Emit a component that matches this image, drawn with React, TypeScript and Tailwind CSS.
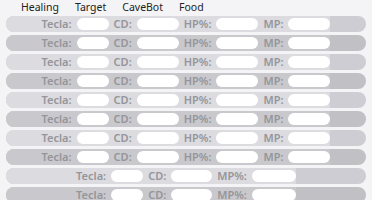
import React from "react"

const tabs = ["Healing", "Target", "CaveBot", "Food"]

type Field = { label: string; w: string }

const fullRow: Field[] = [
	{ label: "Tecla:", w: "w-[32px]" },
	{ label: "CD:", w: "w-[42px]" },
	{ label: "HP%:", w: "w-[42px]" },
	{ label: "MP:", w: "w-[42px]" },
]

const manaRow: Field[] = [
	{ label: "Tecla:", w: "w-[32px]" },
	{ label: "CD:", w: "w-[41px]" },
	{ label: "MP%:", w: "w-[44px]" },
]

const Row: React.FC<{ fields: Field[]; dark: boolean }> = ({ fields, dark }) => {
	return (
		<div
			className={`flex h-4 shrink-0 overflow-hidden rounded-full ${
				dark ? "bg-[#c0c0c5]" : "bg-[#cdcdd3]"
			}`}
		>
			<div className={`flex-1 ${dark ? "bg-[#c9c9cd]" : "bg-[#dbdbe0]"}`} />
			<div
				className={`flex items-center gap-[5px] ${dark ? "bg-[#c9c9cd]" : "bg-[#dbdbe0]"}`}
			>
				{fields.map((f) => (
					<React.Fragment key={f.label}>
						<span className="text-[11px] font-semibold leading-none text-[#95959a]">
							{f.label}
						</span>
						<div className={`h-3 rounded-full bg-white ${f.w}`} />
					</React.Fragment>
				))}
			</div>
			<div className="flex-1" />
		</div>
	)
}

export default function App() {
	const rows = Array.from({ length: 8 }, (_, i) => i)
	return (
		<div
			className="flex h-[200px] w-[372px] flex-col overflow-hidden bg-[#f4f4f6]"
			style={{ fontFamily: '"Noto Sans", sans-serif' }}
		>
			<div className="flex h-[23px] items-center gap-[16px] pl-[21px] text-[10.5px] text-[#222]">
				{tabs.map((t) => (
					<span key={t}>{t}</span>
				))}
			</div>
			<div className="flex flex-col gap-[3px] px-[6px]">
				{rows.map((i) => (
					<Row key={i} fields={fullRow} dark={i % 2 === 1} />
				))}
				<Row fields={manaRow} dark={false} />
				<Row fields={manaRow} dark={true} />
			</div>
		</div>
	)
}
